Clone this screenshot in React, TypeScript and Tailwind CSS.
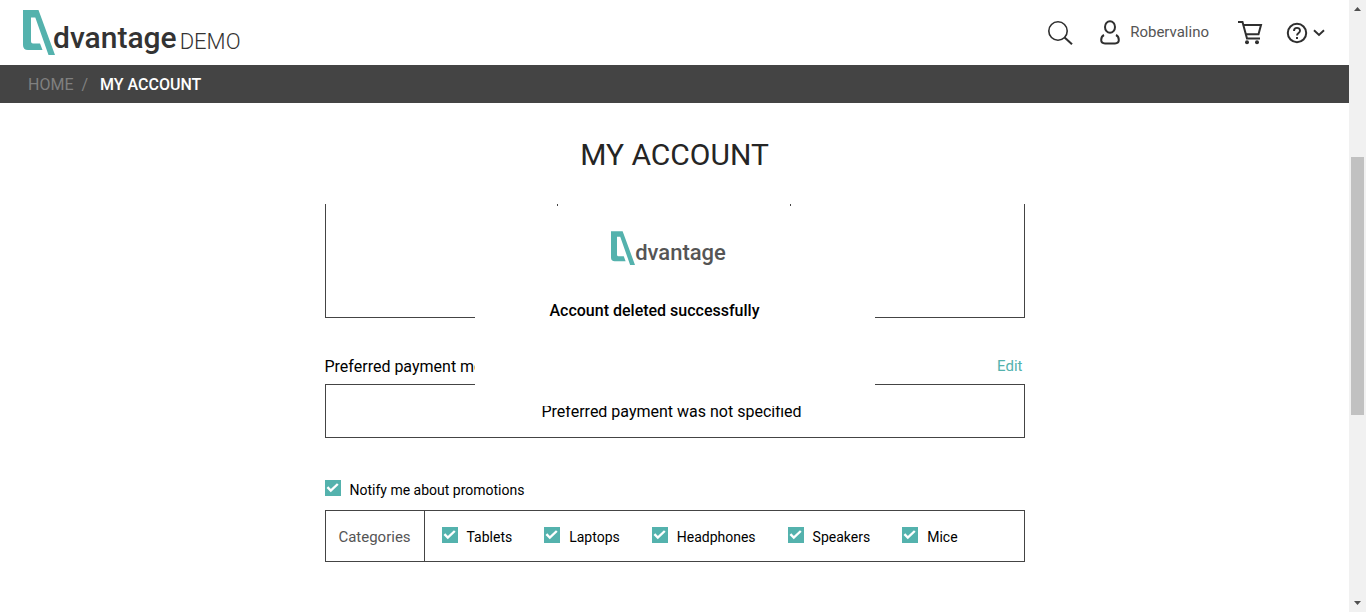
import React, { useId } from "react";

const categories = ["Tablets", "Laptops", "Headphones", "Speakers", "Mice"];

function LogoMark({ className }: { className: string }) {
  return (
    <svg viewBox="0 0 32 45" className={className} fill="#54b2ad" aria-hidden="true">
      <path d="M0 0H15.5L32 45H25.5L12.3 7.5H8V31.5Q8 33.5 10 33.5H17L19.5 40H5Q0 40 0 35Z" />
    </svg>
  );
}

function Check({ label, textClass }: { label: string; textClass: string }) {
  const id = useId();
  return (
    <div className="flex items-start gap-[9px]">
      <span className="grid size-4">
        <input
          id={id}
          type="checkbox"
          defaultChecked
          className="peer col-start-1 row-start-1 size-4 appearance-none border border-[#54b2ad] bg-white checked:bg-[#54b2ad]"
        />
        <svg
          viewBox="0 0 16 16"
          className="pointer-events-none invisible col-start-1 row-start-1 size-4 peer-checked:visible"
          fill="none"
          stroke="#fff"
          strokeWidth="2.4"
          aria-hidden="true"
        >
          <path d="M2.4 7.2 5.8 10.6 12.8 4" />
        </svg>
      </span>
      <label htmlFor={id} className={textClass}>
        {label}
      </label>
    </div>
  );
}

function Header() {
  return (
    <header className="flex h-[65px] items-start justify-between pl-[23px] pr-6">
      <a href="#home" className="flex items-start pt-[10px]" aria-label="Advantage demo">
        <LogoMark className="h-[45px] w-8" />
        <span className="-ml-[2px] pt-[10px] text-[30px] leading-9 font-medium text-[#333]">dvantage</span>
        <span className="ml-[3px] pt-[14px] text-[22px] leading-9 font-light text-[#333]">DEMO</span>
      </a>
      <nav className="flex h-[65px] items-center text-[#2f2f2f]">
        <button type="button" aria-label="Search">
          <svg viewBox="0 0 26 26" className="size-[26px]" fill="none" stroke="currentColor" strokeWidth="1.6">
            <circle cx="10" cy="11" r="9.2" />
            <path d="M16.6 17.4 24 24.2" strokeWidth="2" />
          </svg>
        </button>
        <button type="button" className="ml-[26px] flex items-center gap-[10px]">
          <svg viewBox="0 0 20 26" className="h-[26px] w-5" fill="none" stroke="currentColor" strokeWidth="2">
            <ellipse cx="10" cy="7" rx="5" ry="5.8" />
            <path d="M4 15C2 16 1.200 18 1.200 20C1.200 22.600 2.800 23.400 5 23.400H15C17.200 23.400 18.800 22.600 18.800 20C18.800 18 18 16 16 15" />
          </svg>
          <span className="pb-[2px] text-[15px] leading-6 text-[#555]">Robervalino</span>
        </button>
        <button type="button" aria-label="Cart" className="ml-[29px]">
          <svg viewBox="0 0 26 26" className="size-[26px]" fill="none" stroke="currentColor" strokeWidth="2">
            <path d="M0 2H4.500L9 18.500H22M5.300 5H23L20.500 14.200H8" />
            <circle cx="9" cy="22.200" r="2" fill="currentColor" stroke="none" />
            <circle cx="19" cy="22.200" r="2" fill="currentColor" stroke="none" />
          </svg>
        </button>
        <button type="button" aria-label="Help" className="ml-[22px] flex items-center gap-[5px]">
          <svg viewBox="0 0 22 22" className="size-[22px]" fill="none" stroke="currentColor" strokeWidth="2">
            <circle cx="11" cy="11" r="9.200" />
            <path d="M8 9C8 4.800 14 5 14 8.700C14 11 11 10.800 11 13.500" strokeWidth="1.900" />
            <path d="M11 15V17" />
          </svg>
          <svg viewBox="0 0 12 8" className="h-2 w-3" fill="none" stroke="currentColor" strokeWidth="1.900">
            <path d="M1 1.200 6 6 11 1.200" />
          </svg>
        </button>
      </nav>
    </header>
  );
}

function Scrollbar() {
  return (
    <div className="flex w-[17px] shrink-0 flex-col items-center bg-[#f1f1f1]" aria-hidden="true">
      <svg viewBox="0 0 17 17" className="size-[17px]" fill="#505050">
        <path d="M5 11 8.500 7 12 11Z" />
      </svg>
      <div className="mt-[140px] h-[258px] w-[13px] bg-[#c1c1c1]" />
      <svg viewBox="0 0 17 17" className="mt-auto size-[17px]" fill="#505050">
        <path d="M5 6 8.500 10 12 6Z" />
      </svg>
    </div>
  );
}

export default function App() {
  return (
    <div className="flex h-screen overflow-hidden bg-white font-[Roboto,sans-serif] text-black">
      <div className="min-w-0 flex-1">
        <Header />
        <nav className="flex h-[38px] items-center bg-[#444] pt-[2px] pl-7 text-[16px]" aria-label="Breadcrumb">
          <a href="#home" className="text-[#808080]">HOME</a>
          <span className="ml-2 text-[#808080]">/</span>
          <a href="#account" className="ml-3 font-medium text-white">MY ACCOUNT</a>
        </nav>
        <main>
          <h1 className="pt-8 text-center text-[30px] leading-10 text-[#252525]">MY ACCOUNT</h1>
          <div className="relative mx-auto mt-[29px] w-[700px] max-w-full">
            <section className="grid h-[114px] grid-cols-3 border-x border-b border-[#444]">
              <div className="border-r border-[#444]" />
              <div className="border-r border-[#444]" />
              <div />
            </section>
            <section className="mt-9">
              <div className="flex h-[30px] items-start justify-between pr-[2px] leading-6">
                <h2 className="pt-px text-[16px]">Preferred payment method</h2>
                <a href="#edit" className="text-[15px] text-[#54b2ad]">Edit</a>
              </div>
              <p className="flex h-[54px] items-center justify-center border border-[#444] pt-[2px] pr-[6px] text-[16px]">
                Preferred payment was not specified
              </p>
            </section>
            <section className="mt-[42px]">
              <Check label="Notify me about promotions" textClass="text-[14px] leading-5" />
              <div className="mt-[10px] flex h-[52px] items-stretch border border-[#444]">
                <h3 className="flex w-[99px] items-center justify-center border-r border-[#444] pt-[2px] text-[15px] text-[#555]">
                  Categories
                </h3>
                <div className="flex items-start gap-8 pt-4 pl-[17px]">
                  {categories.map((c) => (
                    <Check key={c} label={c} textClass="text-[14px] leading-5" />
                  ))}
                </div>
              </div>
            </section>
            <div
              role="dialog"
              aria-label="Account deleted"
              className="absolute top-[2px] left-[150px] h-[200px] w-[400px] bg-white pt-[25px]"
            >
              <div className="flex items-start justify-center pr-3">
                <LogoMark className="h-[34px] w-6" />
                <span className="pt-2 text-[22px] leading-7 font-medium text-[#555]">dvantage</span>
              </div>
              <p className="mt-8 pr-10 text-center text-[16px] leading-6 font-medium">
                Account deleted successfully
              </p>
            </div>
          </div>
        </main>
      </div>
      <Scrollbar />
    </div>
  );
}
